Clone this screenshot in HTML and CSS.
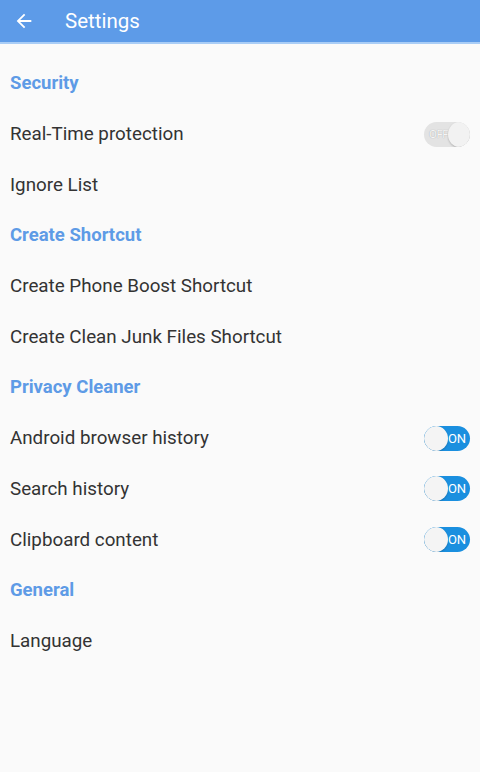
FILE: index.html
```html
<!DOCTYPE html>
<html>
<head>
<meta charset="utf-8">
<link rel="stylesheet" href="styles.css">
</head>
<body>
<header class="appbar">
  <svg class="back" viewBox="0 0 24 24" width="22" height="22"><path d="M20 11H7.83l5.59-5.59L12 4l-8 8 8 8 1.41-1.41L7.83 13H20v-2z" fill="#fff"/></svg>
  <span class="title">Settings</span>
</header>
<main class="list">
  <div class="row section">Security</div>
  <div class="row item"><span>Real-Time protection</span><span class="switch off"><span class="label">OFF</span><span class="knob"></span></span></div>
  <div class="row item">Ignore List</div>
  <div class="row section">Create Shortcut</div>
  <div class="row item">Create Phone Boost Shortcut</div>
  <div class="row item">Create Clean Junk Files Shortcut</div>
  <div class="row section">Privacy Cleaner</div>
  <div class="row item"><span>Android browser history</span><span class="switch on"><span class="knob"></span><span class="label">ON</span></span></div>
  <div class="row item"><span>Search history</span><span class="switch on"><span class="knob"></span><span class="label">ON</span></span></div>
  <div class="row item"><span>Clipboard content</span><span class="switch on"><span class="knob"></span><span class="label">ON</span></span></div>
  <div class="row section">General</div>
  <div class="row item">Language</div>
</main>
</body>
</html>
```
FILE: styles.css
```css
html, body {
  margin: 0;
  padding: 0;
  background: #fafafa;
  font-family: Roboto, "Noto Sans", sans-serif;
}
.appbar {
  height: 42px;
  background: #5d9be8;
  border-bottom: 2px solid #a9cdf6;
  display: flex;
  align-items: center;
}
.back {
  margin-left: 13px;
  margin-right: 30px;
}
.title {
  color: #fff;
  font-size: 20.5px;
}
.list {
  padding-top: 14px;
}
.row {
  height: 50.7px;
  display: flex;
  align-items: center;
  justify-content: space-between;
  padding: 0 10px;
  font-size: 18.8px;
}
.section {
  color: #5e9be6;
  font-weight: bold;
  font-size: 18.5px;
}
.item {
  color: #333;
}
/* toggle switch: track with label, round knob on top */
.switch {
  flex: none;
  position: relative;
  width: 46px;
  height: 25px;
  border-radius: 13px;
  display: flex;
  align-items: center;
  overflow: hidden;
}
.switch .knob {
  position: absolute;
  top: 0;
  width: 24px;
  height: 25px;
  border-radius: 50%;
  background: #f4f4f4;
  box-shadow: 0 1px 2px rgba(0,0,0,0.22);
}
.switch.on {
  background: #1a8fdf;
}
.switch.on .knob {
  left: 0;
}
.switch.on .label {
  color: #fff;
  margin-left: 24px;
  font-size: 13px;
  letter-spacing: -0.3px;
}
.switch.off {
  background: #e3e3e3;
}
.switch.off .label {
  color: #f6f6f6;
  margin-left: 5px;
  font-size: 11.5px;
  letter-spacing: -0.5px;
  text-shadow: 0 0 1px #999;
}
.switch.off .knob {
  right: 0;
  width: 22px;
  background: #f2f2f2;
}
```
